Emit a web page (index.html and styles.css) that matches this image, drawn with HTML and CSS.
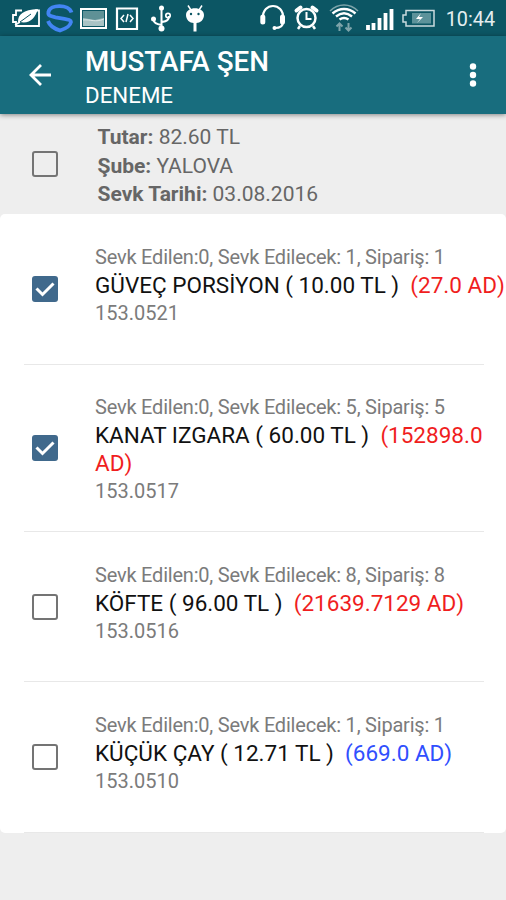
FILE: index.html
```html
<!DOCTYPE html>
<html lang="tr">
<head>
    <meta charset="UTF-8">
    <meta name="viewport" content="width=device-width, initial-scale=1.0">
    <title>MUSTAFA ŞEN</title>
    <link rel="stylesheet" href="styles.css">
</head>
<body>
    <div class="status-bar">
        <svg class="status-icons" width="506" height="36" viewBox="0 0 506 36" fill="none" stroke="#fff">
            <!-- power saver -->
            <path d="M35 10.500h4v15.500H16v-4h-3v-7h3v-4.500h6" stroke-width="1.800"/>
            <path d="M18 22c0-8 5-12 20-13-3 9-8 15-18 13z" fill="#fff" stroke="none"/>
            <path d="M15 25l5-3" stroke-width="1.500"/>
            <path d="M20 22l11-8" stroke="#0c5664" stroke-width="1"/>
            <!-- sync -->
            <g stroke="#4285f4" stroke-width="3.800">
                <path d="M71.500 12.500C69 4 50 4 48.500 12c-1 4 3 4.500 7 5.300l9 1.500c4 .7 6.500 1.200 6.500 3.200-1 5-6 7-11 8.500-5-1.500-10-4-12-9.500"/>
            </g>
            <!-- picture -->
            <path d="M81 9h25v19H81z" stroke-width="2"/>
            <path d="M83 11h21v15H83z" fill="#a9c3c5" stroke="none"/>
            <path d="M83 11h21v7l-9 2-12-2z" fill="#5f9196" stroke="none"/>
            <path d="M83 20c8-1 12 3 21-1" stroke="#d9e5e5"/>
            <!-- developer -->
            <path d="M117 8.500h20v20.500h-20z" stroke-width="2.200"/>
            <path d="M124 15l-3 3.500 3 3.500M130 15l3 3.500-3 3.500M128 14l-2 8" stroke-width="1.500"/>
            <!-- usb -->
            <path d="M161.500 9v20M153.500 19c0 4 3 5 8 6M169 16c0 4-2 5-7 6" stroke-width="2"/>
            <g fill="#fff" stroke="none">
                <circle cx="161.500" cy="8" r="2.500"/>
                <circle cx="153.500" cy="19" r="2.500"/>
                <circle cx="161.500" cy="28.500" r="3"/>
            </g>
            <circle cx="168" cy="15.500" r="2.200" stroke-width="1.700"/>
            <!-- android -->
            <path d="M188 5.500l3 4.500M202 5.500l-3 4.500" stroke-width="1.500"/>
            <path d="M186 15c0-9 18-9 18 0 0 5-4 8-7.500 8v8.500h-3V23c-3.500 0-7.500-3-7.500-8z" fill="#fff" stroke="none"/>
            <g fill="#0c5664" stroke="none">
                <circle cx="191" cy="14" r="1.200"/>
                <circle cx="198.500" cy="14" r="1.200"/>
            </g>
            <!-- headset -->
            <path d="M263 18c-1-16 21-16 20 0v4c0 4-3 6-8 6" stroke-width="2.200"/>
            <path d="M262.800 17v5M282.500 17v5" stroke-width="5" stroke-linecap="round"/>
            <circle cx="274.500" cy="28" r="2" fill="#fff" stroke="none"/>
            <!-- alarm -->
            <circle cx="306.500" cy="18" r="9" stroke-width="2.500"/>
            <path d="M296.500 10.500l4-3M316.500 10.500l-4-3" stroke-width="4" stroke-linecap="round"/>
            <path d="M300 26l-2 3M313 26l2 3" stroke-width="2.500"/>
            <path d="M306.500 12v7h5" stroke-width="2"/>
            <!-- wifi -->
            <path d="M330 11c8-8 20-8 28 0" stroke="#7ea4aa" stroke-width="1.500"/>
            <path d="M332.500 13.500c7-6 16-6 23 0M336 16.500c5-4 11-4 16 0M339.500 19.500c3-2 6-2 9 0" stroke-width="2.500"/>
            <path d="M339.500 31v-7M336.500 26.500l3-3 3 3M348.500 23v7M345.500 27.500l3 3 3-3" stroke="#7ea4aa" stroke-width="2"/>
            <!-- signal -->
            <path d="M368 30v-5M373.500 30v-7M379.500 30V18M385.500 30V13M391.500 30V9" stroke-width="3.800"/>
            <!-- battery -->
            <path d="M406 10.500h28v15.500h-28v-4h-3v-7h3z" stroke="#c9dadd" stroke-width="1.500"/>
            <path d="M412 13h19v10.500h-19z" fill="#5c929a" stroke="none"/>
            <path d="M421 13l-5 6h4l-3 4 6-6h-4z" fill="#fff" stroke="none"/>
        </svg>
        <span class="clock">10:44</span>
    </div>

    <header class="app-bar">
        <svg class="back" width="24" height="24" viewBox="0 0 24 24" fill="none" stroke="#fff" stroke-width="2.800">
            <path d="M24.500 12H4M14 2L4 12l10 10"/>
        </svg>
        <div class="titles">
            <h1>MUSTAFA ŞEN</h1>
            <h2>DENEME</h2>
        </div>
        <svg class="menu" width="8" height="24" viewBox="0 0 8 24" fill="#fff">
            <circle cx="4" cy="3.500" r="3.200"/>
            <circle cx="4" cy="12" r="3.200"/>
            <circle cx="4" cy="20.500" r="3.200"/>
        </svg>
    </header>

    <section class="summary">
        <span class="checkbox"></span>
        <div class="summary-text">
            <p><b>Tutar:</b> 82.60 TL</p>
            <p><b>Şube:</b> YALOVA</p>
            <p><b>Sevk Tarihi:</b> 03.08.2016</p>
        </div>
    </section>

    <ul class="list">
        <li class="item">
            <span class="checkbox checked"><svg width="26" height="26" viewBox="0 0 26 26"><path d="M4.500 12.500l6 6L21.500 7.500"/></svg></span>
            <div class="info">
                <p class="meta">Sevk Edilen:0, Sevk Edilecek: 1, Sipariş: 1</p>
                <p class="name nowrap">GÜVEÇ PORSİYON ( 10.00 TL ) &nbsp;<span class="red">(27.0 AD)</span></p>
                <p class="code">153.0521</p>
            </div>
        </li>
        <li class="item tall">
            <span class="checkbox checked"><svg width="26" height="26" viewBox="0 0 26 26"><path d="M4.500 12.500l6 6L21.500 7.500"/></svg></span>
            <div class="info">
                <p class="meta">Sevk Edilen:0, Sevk Edilecek: 5, Sipariş: 5</p>
                <p class="name">KANAT IZGARA ( 60.00 TL ) &nbsp;<span class="red">(152898.0</span> <span class="red">AD)</span></p>
                <p class="code">153.0517</p>
            </div>
        </li>
        <li class="item">
            <span class="checkbox"></span>
            <div class="info">
                <p class="meta">Sevk Edilen:0, Sevk Edilecek: 8, Sipariş: 8</p>
                <p class="name">KÖFTE ( 96.00 TL ) &nbsp;<span class="red">(21639.7129 AD)</span></p>
                <p class="code">153.0516</p>
            </div>
        </li>
        <li class="item">
            <span class="checkbox"></span>
            <div class="info">
                <p class="meta">Sevk Edilen:0, Sevk Edilecek: 1, Sipariş: 1</p>
                <p class="name">KÜÇÜK ÇAY ( 12.71 TL ) &nbsp;<span class="blue">(669.0 AD)</span></p>
                <p class="code">153.0510</p>
            </div>
        </li>
    </ul>
</body>
</html>
```

FILE: styles.css
```css
* {
    margin: 0;
    padding: 0;
    box-sizing: border-box;
}

body {
    min-height: 100vh;
    background-color: #eee;
    font-family: Roboto, "Liberation Sans", sans-serif;
    overflow-x: hidden;
}

.status-bar {
    display: grid;
    height: 36px;
    background-color: #0c5664;
}

.status-icons,
.clock {
    grid-area: 1 / 1;
}

.clock {
    justify-self: end;
    margin-right: 11px;
    line-height: 39px;
    font-size: 19.8px;
    color: #e4eef0;
}

.app-bar {
    display: flex;
    align-items: center;
    height: 78px;
    padding: 0 29px 0 27px;
    background-color: #186d7e;
    color: #fff;
    box-shadow: 0 1px 5px rgba(0, 0, 0, 0.45);
}

.titles {
    flex: 1;
    margin-left: 34px;
    padding-top: 7px;
}

h1 {
    font-size: 27.8px;
    line-height: 34px;
    font-weight: 500;
}

h2 {
    font-size: 22.3px;
    line-height: 33px;
    font-weight: 400;
}

.summary {
    display: flex;
    align-items: center;
    height: 100px;
    padding-left: 32px;
    color: #666;
}

.summary-text {
    margin-left: 39.5px;
    padding-top: 4px;
    font-size: 21px;
    line-height: 28.5px;
}

.checkbox {
    flex: none;
    width: 26px;
    height: 26px;
    border: 2.5px solid #747474;
    border-radius: 3px;
}

.checked {
    border: none;
    background-color: #40698c;
}

.checked svg {
    display: block;
    fill: none;
    stroke: #fff;
    stroke-width: 3;
}

.list {
    list-style: none;
    background-color: #fff;
    border-radius: 5px;
}

.item {
    display: flex;
    align-items: center;
    height: 150.5px;
    padding-left: 32px;
    background: linear-gradient(#e8e8e8, #e8e8e8) 24px 100% / 460px 1px no-repeat;
}

.item.tall {
    height: 167px;
}

.info {
    width: 396px;
    margin-left: 37px;
    margin-top: -8px;
}

.tall .info {
    margin-top: 2px;
}

.meta,
.code {
    font-size: 20px;
    line-height: 28px;
    color: #7b7b7b;
}

.meta {
    letter-spacing: -0.21px;
}

.name {
    font-size: 22.5px;
    line-height: 28px;
    color: #111;
}

.nowrap {
    white-space: nowrap;
}

.red {
    color: #f01e1e;
}

.blue {
    color: #304ffe;
}
```
